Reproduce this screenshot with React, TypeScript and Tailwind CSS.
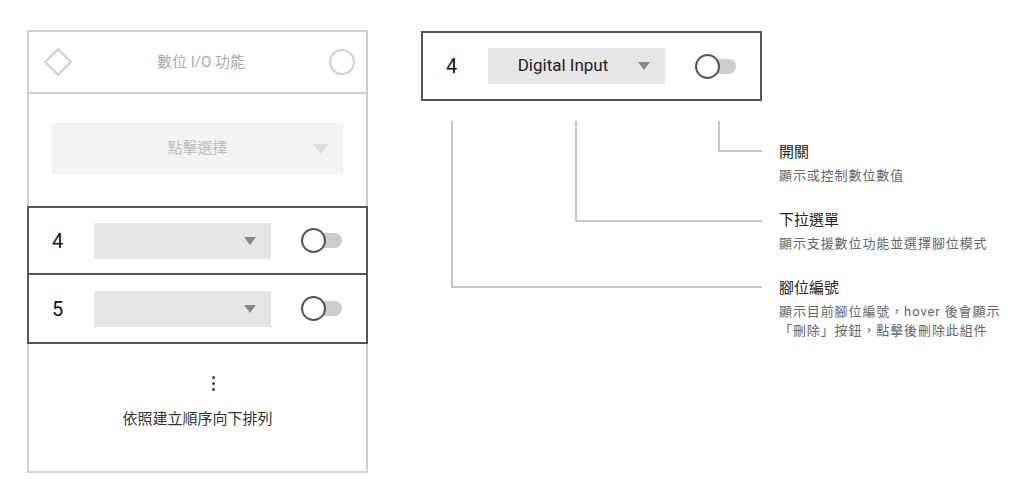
import React from 'react';

function Caret({ color = '#888', size = 'sm' }: { color?: string; size?: 'sm' | 'lg' }) {
  const w = size === 'lg' ? 15 : 12;
  const h = size === 'lg' ? 10 : 8;
  return (
    <svg width={w} height={h} viewBox={`0 0 ${w} ${h}`} className="shrink-0">
      <polygon points={`0,0 ${w},0 ${w / 2},${h}`} fill={color} />
    </svg>
  );
}

function Toggle() {
  return (
    <div className="relative w-[41px] h-[25px] shrink-0">
      <div className="absolute right-0 top-[5px] w-[30px] h-[15px] rounded-full bg-[#cccccc]" />
      <div className="absolute left-0 top-0 w-[25px] h-[25px] rounded-full border-2 border-[#555] bg-white" />
    </div>
  );
}

function PinRow({ pin, value, className }: { pin: string; value?: string; className: string }) {
  return (
    <div className={`flex items-center h-[69px] border-[#555] ${className}`}>
      <span className="w-[65px] pl-[23px] text-[20px] text-[#111] leading-none">{pin}</span>
      <div className="flex items-center w-[177px] h-[36px] bg-[#e6e6e6] pr-[15px]">
        <span className="flex-1 text-center text-[17px] text-[#222]">{value}</span>
        <Caret />
      </div>
      <div className="ml-[30px]">
        <Toggle />
      </div>
    </div>
  );
}

function Note({ title, lines }: { title: string; lines: string[] }) {
  return (
    <div className="flex flex-col whitespace-nowrap">
      <p className="text-[15px] leading-[20px] text-[#222]">{title}</p>
      <div className="mt-[4px] text-[13px] leading-[19px] tracking-[0.9px] text-[#666]">
        {lines.map((l) => (
          <p key={l}>{l}</p>
        ))}
      </div>
    </div>
  );
}

export default function App() {
  return (
    <div className="w-[1024px] h-[502px] bg-white flex font-[Roboto,'Noto_Sans_CJK_TC',sans-serif] overflow-hidden">
      {/* 左側：手機畫面 */}
      <section className="shrink-0 ml-[27px] mt-[30px] w-[341px] h-[443px] border-2 border-[#cfcfcf] flex flex-col">
        <div className="h-[62px] border-b-2 border-[#cfcfcf] flex items-center justify-between pl-[14px] pr-[11px]">
          <div className="w-[30px] h-[30px] flex items-center justify-center">
            <div className="w-[20px] h-[20px] rotate-45 border-2 border-[#cfcfcf]" />
          </div>
          <p className="text-[15px] text-[#aaa]">數位 I/O 功能</p>
          <div className="w-[26px] h-[26px] rounded-full border-2 border-[#cfcfcf]" />
        </div>

        <div className="mt-[29px] mx-[23px] h-[51px] bg-[#f3f3f3] flex items-center pr-[15px]">
          <span className="flex-1 text-center pl-[30px] text-[15px] text-[#bbb]">點擊選擇</span>
          <Caret color="#dcdcdc" size="lg" />
        </div>

        <div className="mt-[32px] -mx-[2px]">
          <PinRow pin="4" className="border-2" />
          <PinRow pin="5" className="border-x-2 border-b-2" />
        </div>

        <div className="flex flex-col items-center pt-[32px]">
          <div className="flex flex-col gap-[3px] translate-x-[16px]">
            <div className="w-[3px] h-[3px] rounded-full bg-[#444]" />
            <div className="w-[3px] h-[3px] rounded-full bg-[#444]" />
            <div className="w-[3px] h-[3px] rounded-full bg-[#444]" />
          </div>
          <p className="mt-[18px] text-[15px] leading-[20px] text-[#333]">依照建立順序向下排列</p>
        </div>
      </section>

      {/* 右側：元件說明 */}
      <section className="relative shrink-0 ml-[53px] mt-[31px] w-[600px] flex flex-col">
        <div className="w-[341px]">
          <PinRow pin="4" value="Digital Input" className="border-2 h-[70px]" />
        </div>

        {/* 連接線 */}
        <div className="absolute left-[30px] top-[90px] w-[311px] h-[167px] border-l-2 border-b-2 border-[#c6c6c6]" />
        <div className="absolute left-[154px] top-[90px] w-[187px] h-[101px] border-l-2 border-b-2 border-[#c6c6c6]" />
        <div className="absolute left-[297px] top-[90px] w-[44px] h-[31px] border-l-2 border-b-2 border-[#c6c6c6]" />

        <div className="ml-[358px] mt-[41px] flex flex-col gap-[25px]">
          <Note title="開關" lines={['顯示或控制數位數值']} />
          <Note title="下拉選單" lines={['顯示支援數位功能並選擇腳位模式']} />
          <Note
            title="腳位編號"
            lines={['顯示目前腳位編號，hover 後會顯示', '「刪除」按鈕，點擊後刪除此組件']}
          />
        </div>
      </section>
    </div>
  );
}
